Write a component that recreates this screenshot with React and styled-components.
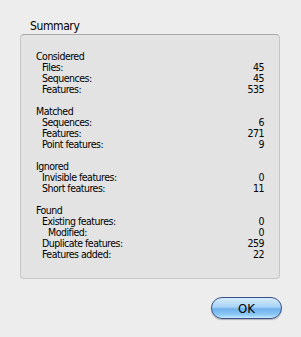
import React from "react";
import styled, { createGlobalStyle } from "styled-components";

const Global = createGlobalStyle`
  html, body {
    margin: 0;
    padding: 0;
    background: #ededed;
  }
  body {
    font-family: "DejaVu Sans Condensed", "DejaVu Sans", sans-serif;
    color: #000;
  }
`;

const Dialog = styled.div`
  width: 301px;
  height: 337px;
  display: flex;
  flex-direction: column;
  box-sizing: border-box;
  padding-top: 19px;
`;

const Heading = styled.div`
  font-size: 12px;
  letter-spacing: -0.4px;
  line-height: 14px;
  padding-left: 30px;
  margin-bottom: 1px;
`;

const Panel = styled.div`
  margin: 0 21px 0 20px;
  height: 245px;
  box-sizing: border-box;
  background: #e3e3e3;
  border: 1px solid #c6c6c6;
  border-top-color: #a9a9a9;
  border-radius: 4px;
  padding: 16px 15px 0 15px;
  font-size: 10.5px;
  letter-spacing: -0.5px;
`;

const Group = styled.div`
  margin-bottom: 11px;
`;

const Row = styled.div`
  display: flex;
  justify-content: space-between;
  height: 11px;
  line-height: 11px;
  padding-left: ${(p) => p.$indent * 6}px;
  white-space: nowrap;
`;

const Footer = styled.div`
  display: flex;
  justify-content: flex-end;
  padding: 18px 19px 0 0;
`;

const OkButton = styled.button`
  width: 71px;
  height: 22px;
  border-radius: 11px;
  border: 1px solid #3b4f8c;
  background: linear-gradient(
    to bottom,
    #d5ecfd 0%,
    #a8d3f7 45%,
    #6fb1ec 55%,
    #8fcaf6 85%,
    #c9ecff 100%
  );
  box-shadow: 0 1px 1px rgba(0, 0, 0, 0.25);
  font-family: "DejaVu Sans Condensed", "DejaVu Sans", sans-serif;
  font-size: 13px;
  color: #000;
  padding: 0;
`;

const groups = [
  {
    title: "Considered",
    rows: [
      ["Files:", "45", 1],
      ["Sequences:", "45", 1],
      ["Features:", "535", 1],
    ],
  },
  {
    title: "Matched",
    rows: [
      ["Sequences:", "6", 1],
      ["Features:", "271", 1],
      ["Point features:", "9", 1],
    ],
  },
  {
    title: "Ignored",
    rows: [
      ["Invisible features:", "0", 1],
      ["Short features:", "11", 1],
    ],
  },
  {
    title: "Found",
    rows: [
      ["Existing features:", "0", 1],
      ["Modified:", "0", 2],
      ["Duplicate features:", "259", 1],
      ["Features added:", "22", 1],
    ],
  },
];

export default function App() {
  return (
    <>
      <Global />
      <Dialog>
        <Heading>Summary</Heading>
        <Panel>
          {groups.map((g) => (
            <Group key={g.title}>
              <Row $indent={0}>
                <span>{g.title}</span>
              </Row>
              {g.rows.map(([label, value, indent]) => (
                <Row key={label} $indent={indent}>
                  <span>{label}</span>
                  <span>{value}</span>
                </Row>
              ))}
            </Group>
          ))}
        </Panel>
        <Footer>
          <OkButton>OK</OkButton>
        </Footer>
      </Dialog>
    </>
  );
}
